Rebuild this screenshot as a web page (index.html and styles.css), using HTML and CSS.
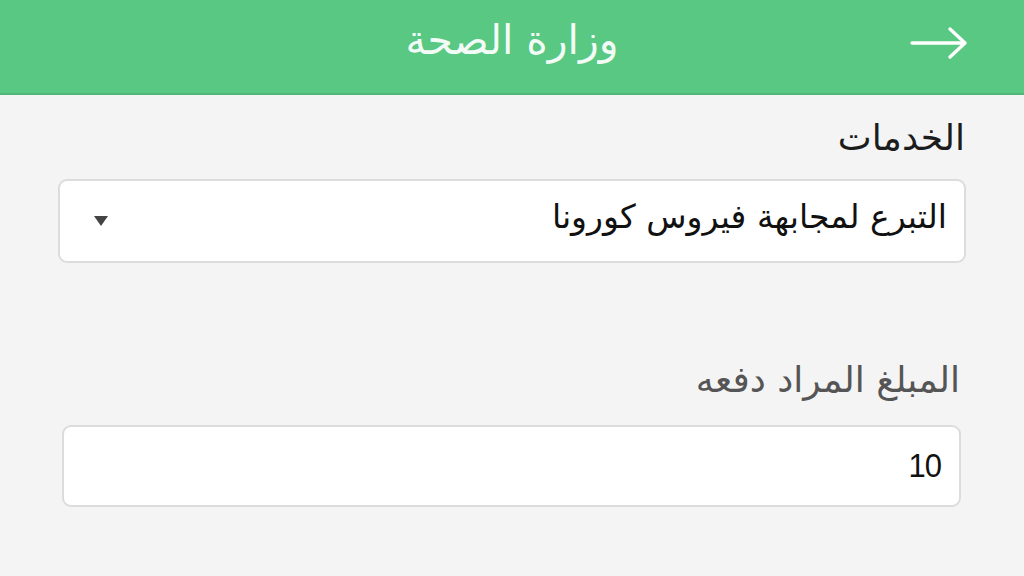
FILE: index.html
```html
<!DOCTYPE html>
<html lang="ar" dir="rtl">
<head>
<meta charset="utf-8">
<link rel="stylesheet" href="styles.css">
</head>
<body>
<header class="topbar">
  <span class="back">
    <svg width="58" height="34" viewBox="0 0 58 34"><path d="M2 17 H55 M40 3 L55 17 L40 31" fill="none" stroke="#fff" stroke-width="3.4" stroke-linecap="round" stroke-linejoin="round"/></svg>
  </span>
  <h1 class="title">وزارة الصحة</h1>
</header>
<main class="form">
  <div class="field first">
    <label class="label dark">الخدمات</label>
    <div class="box select">
      <span class="value">التبرع لمجابهة فيروس كورونا</span>
      <span class="caret"></span>
    </div>
  </div>
  <div class="field second">
    <label class="label gray">المبلغ المراد دفعه</label>
    <div class="box input">
      <span class="num">10</span>
    </div>
  </div>
</main>
</body>
</html>
```
FILE: styles.css
```css
html, body {
  margin: 0;
  padding: 0;
  background: #f4f4f4;
  font-family: "DejaVu Sans", "Noto Sans", sans-serif;
  width: 1024px;
  height: 576px;
  overflow: hidden;
}
.topbar {
  height: 93px;
  background: #58c883;
  border-bottom: 2px solid #4fb777;
  display: flex;
  align-items: center;
  justify-content: center;
  position: relative;
}
.title {
  margin: 0;
  color: #f2fbf5;
  font-size: 41px;
  font-weight: normal;
  line-height: 1;
  transform: translateY(-6px);
}
.back {
  position: absolute;
  right: 56px;
  top: 26px;
  display: flex;
}
.form {
  display: flex;
  flex-direction: column;
}
.field {
  display: flex;
  flex-direction: column;
}
.field.first {
  padding: 20px 58px 0 58px;
}
.field.second {
  padding: 94px 63px 0 62px;
}
.label {
  font-size: 36px;
  line-height: 46px;
  padding-right: 1px;
}
.label.dark { color: #1c1c1c; }
.label.gray { color: #555; }
.box {
  background: #fff;
  border: 2px solid #dcdcdc;
  border-radius: 9px;
  display: flex;
  align-items: center;
  justify-content: space-between;
  box-sizing: border-box;
}
.select {
  height: 84px;
  margin-top: 18px;
  padding: 0 17px 0 34px;
}
.input {
  height: 82px;
  margin-top: 22px;
  padding: 0 18px;
}
.value {
  font-size: 33px;
  color: #111;
  transform: translateY(-5px);
}
.caret {
  width: 0;
  height: 0;
  border-left: 7px solid transparent;
  border-right: 7px solid transparent;
  border-top: 10px solid #444;
}
.num {
  font-family: "Liberation Sans Narrow", "Liberation Sans", sans-serif;
  font-size: 31px;
  color: #111;
  letter-spacing: -1px;
  transform: scaleY(1.1);
}
```
